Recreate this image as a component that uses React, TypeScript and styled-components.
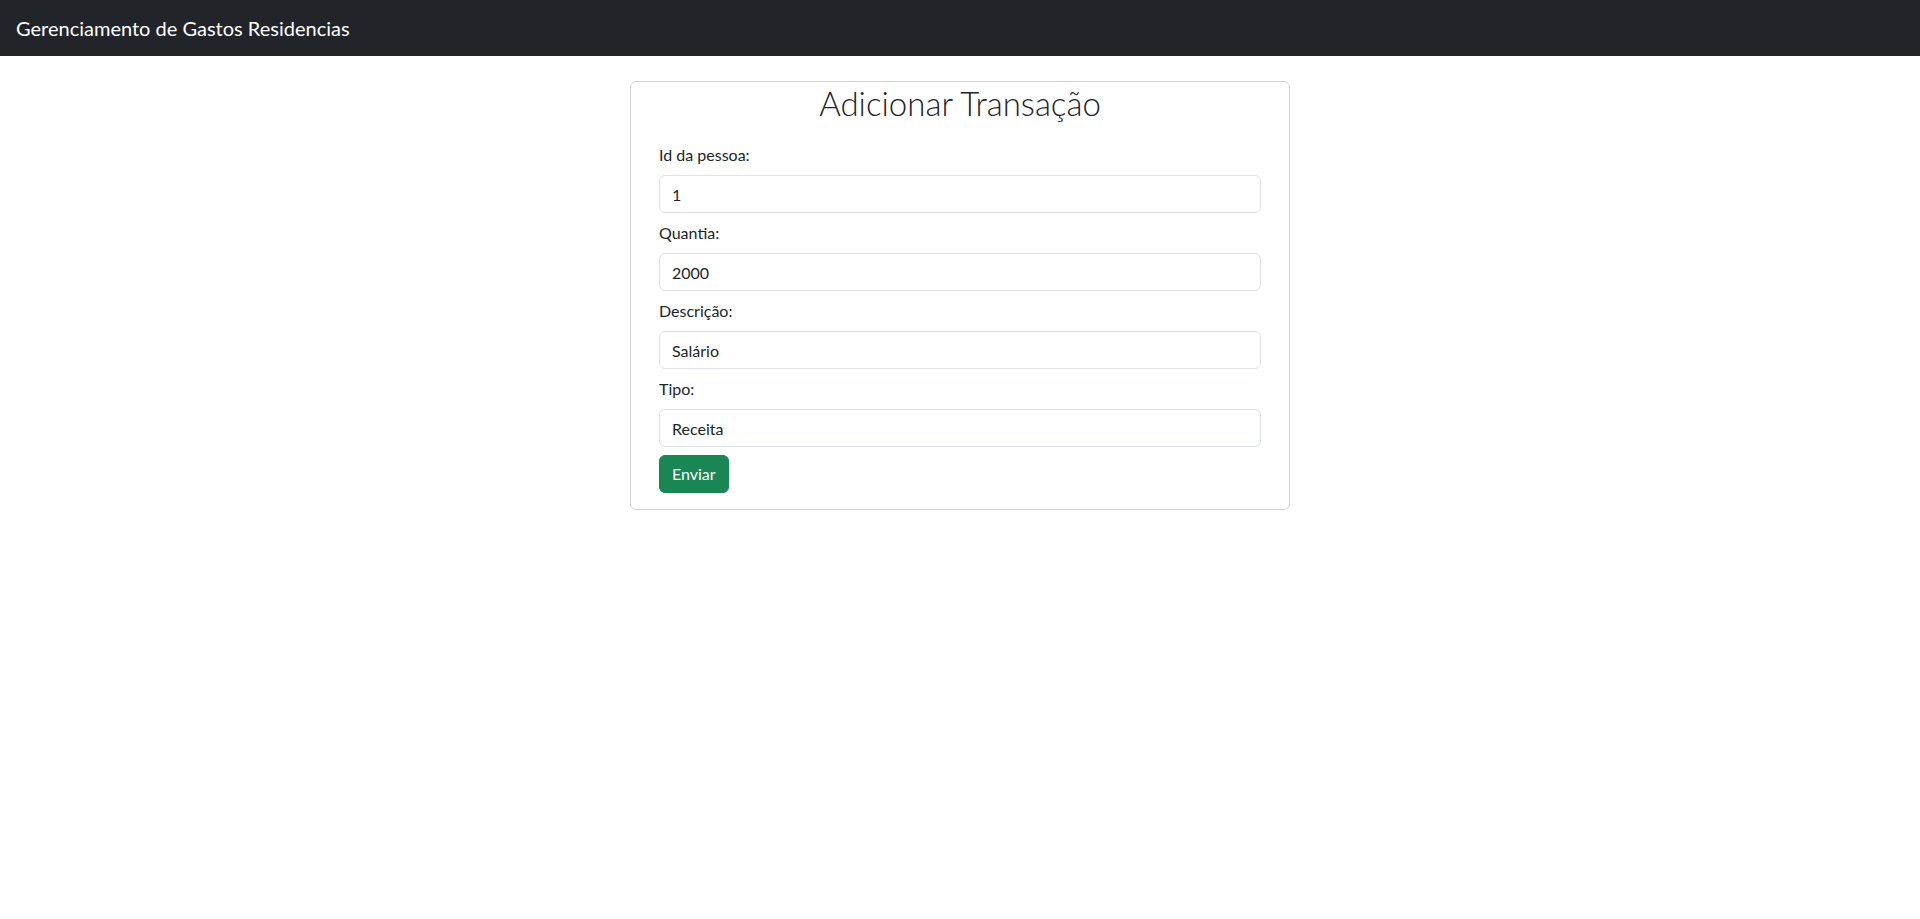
import React from "react";
import styled, { createGlobalStyle } from "styled-components";

const FONT = `Lato, "Liberation Sans", sans-serif`;

const Global = createGlobalStyle`
  * { box-sizing: border-box; }
  html, body { margin: 0; padding: 0; background: #fff; }
  body {
    font-family: ${FONT};
    font-size: 16px;
    line-height: 1.5;
    color: #212529;
  }
`;

const Navbar = styled.nav`
  height: 56px;
  background: #212529;
  display: flex;
  align-items: center;
  padding: 0 16px;
`;

const Brand = styled.span`
  color: #fff;
  font-size: 20px;
  line-height: 30px;
`;

const Main = styled.main`
  display: flex;
  justify-content: center;
  padding-top: 25px;
`;

const Card = styled.form`
  width: 660px;
  border: 1px solid #d3d4d5;
  border-radius: 6px;
  padding: 2px 28px 16px;
  display: flex;
  flex-direction: column;
`;

const Title = styled.h2`
  margin: 0 0 21px;
  font-size: 33px;
  font-weight: 300;
  line-height: 38px;
  text-align: center;
  color: #212529;
`;

const Field = styled.div`
  display: flex;
  flex-direction: column;
  margin-bottom: 8px;
`;

const Label = styled.label`
  font-size: 16px;
  line-height: 24px;
  margin-bottom: 8px;
  color: #212529;
`;

const Input = styled.input`
  height: 38px;
  width: 100%;
  padding: 6px 12px;
  font-family: ${FONT};
  font-size: 16px;
  line-height: 24px;
  color: #212529;
  background: #fff;
  border: 1px solid #dee2e6;
  border-radius: 6px;
  outline: none;
`;

const Button = styled.button`
  align-self: flex-start;
  height: 38px;
  padding: 6px 12px;
  font-family: ${FONT};
  font-size: 16px;
  line-height: 24px;
  color: #fff;
  background: #198754;
  border: 1px solid #198754;
  border-radius: 6px;
  cursor: pointer;
`;

const fields = [
  { id: "pessoa", label: "Id da pessoa:", value: "1" },
  { id: "quantia", label: "Quantia:", value: "2000" },
  { id: "descricao", label: "Descrição:", value: "Salário" },
  { id: "tipo", label: "Tipo:", value: "Receita" },
];

export default function App() {
  return (
    <>
      <Global />
      <Navbar>
        <Brand>Gerenciamento de Gastos Residencias</Brand>
      </Navbar>
      <Main>
        <Card onSubmit={(e) => e.preventDefault()}>
          <Title>Adicionar Transação</Title>
          {fields.map((f) => (
            <Field key={f.id}>
              <Label htmlFor={f.id}>{f.label}</Label>
              <Input id={f.id} defaultValue={f.value} />
            </Field>
          ))}
          <Button type="submit">Enviar</Button>
        </Card>
      </Main>
    </>
  );
}
